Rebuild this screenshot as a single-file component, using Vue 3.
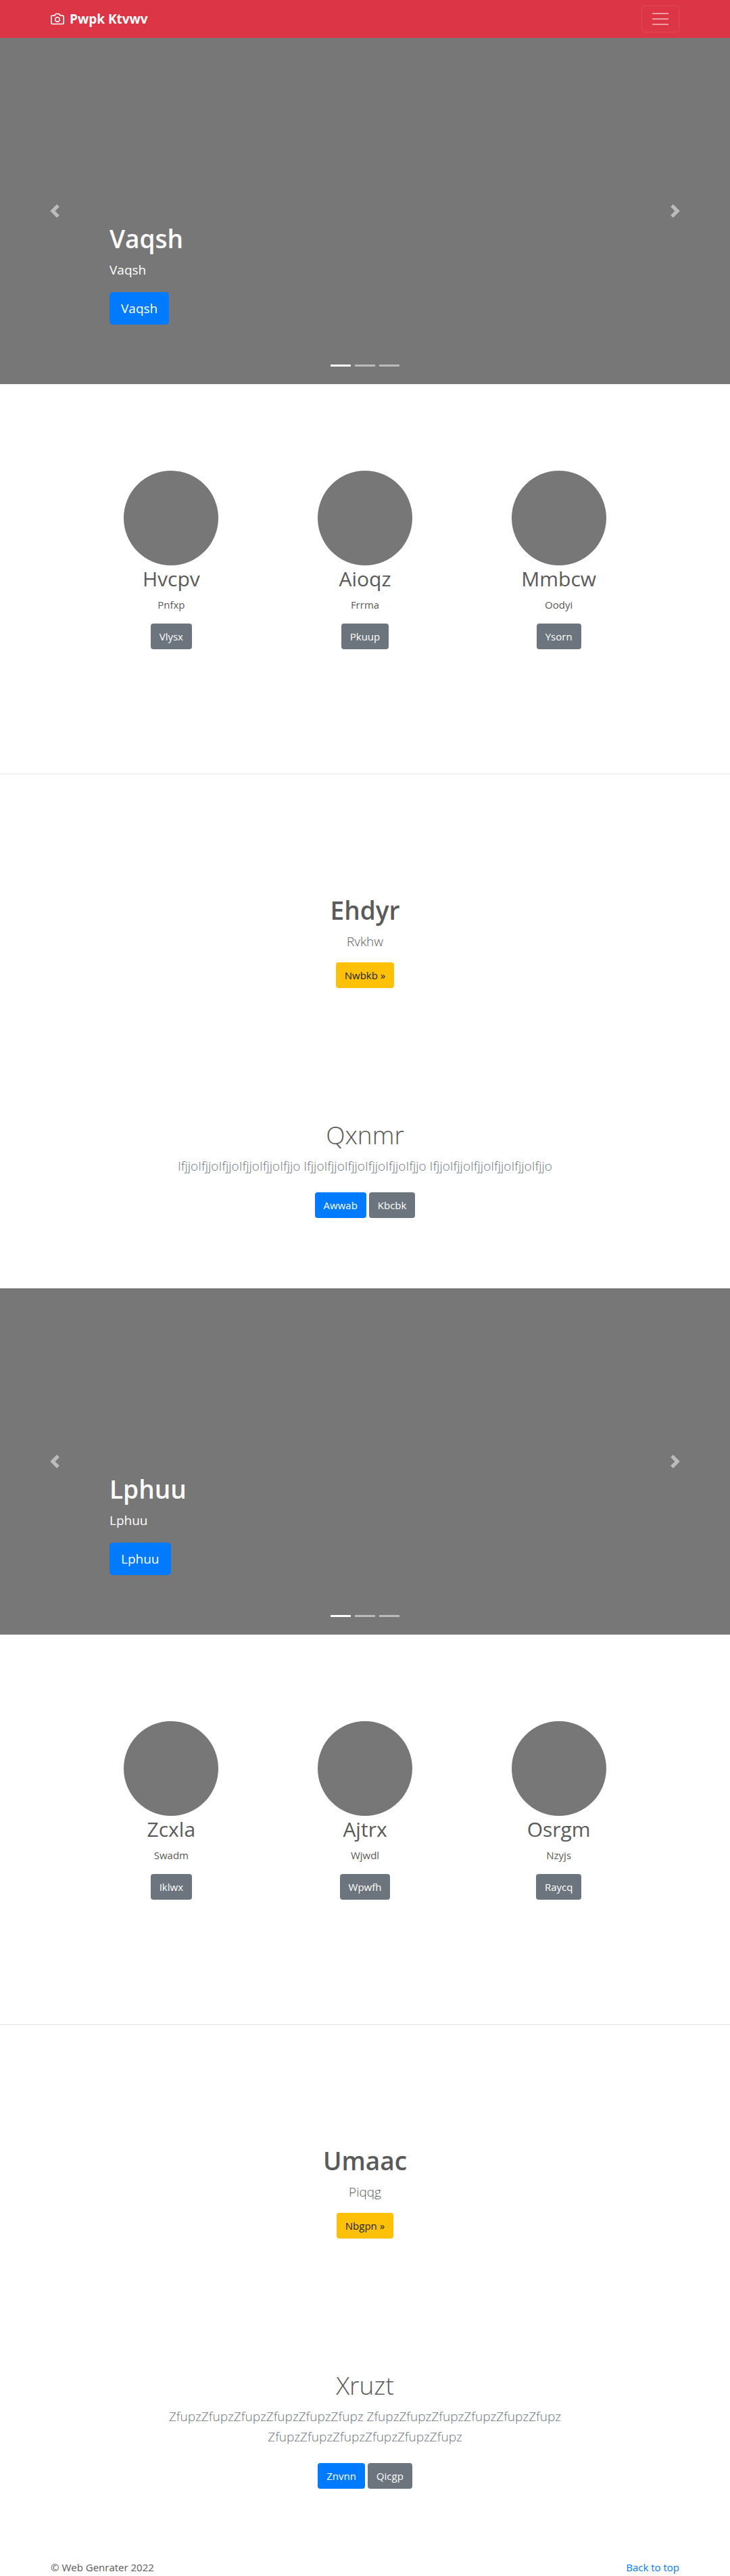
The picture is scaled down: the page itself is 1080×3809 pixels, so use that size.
<script setup>
const sections = [
  {
    hero: 'Vaqsh',
    people: [
      { name: 'Hvcpv', text: 'Pnfxp', action: 'Vlysx' },
      { name: 'Aioqz', text: 'Frrma', action: 'Pkuup' },
      { name: 'Mmbcw', text: 'Oodyi', action: 'Ysorn' },
    ],
    promo: { title: 'Ehdyr', text: 'Rvkhw', action: 'Nwbkb »' },
    album: {
      title: 'Qxnmr',
      text: 'IfjjoIfjjoIfjjoIfjjoIfjjoIfjjo IfjjoIfjjoIfjjoIfjjoIfjjoIfjjo IfjjoIfjjoIfjjoIfjjoIfjjoIfjjo',
      primary: 'Awwab',
      secondary: 'Kbcbk',
    },
  },
  {
    hero: 'Lphuu',
    people: [
      { name: 'Zcxla', text: 'Swadm', action: 'Iklwx' },
      { name: 'Ajtrx', text: 'Wjwdl', action: 'Wpwfh' },
      { name: 'Osrgm', text: 'Nzyjs', action: 'Raycq' },
    ],
    promo: { title: 'Umaac', text: 'Piqqg', action: 'Nbgpn »' },
    album: {
      title: 'Xruzt',
      text: 'ZfupzZfupzZfupzZfupzZfupzZfupz ZfupzZfupzZfupzZfupzZfupzZfupz ZfupzZfupzZfupzZfupzZfupzZfupz',
      primary: 'Znvnn',
      secondary: 'Qicgp',
    },
  },
]
</script>

<template>
  <div class="page">
    <header class="navbar">
      <div class="container bar">
        <a href="#" class="brand">
          <svg width="20" height="20" viewBox="0 0 24 24" fill="none" stroke="currentColor" stroke-width="2" stroke-linecap="round" stroke-linejoin="round" aria-hidden="true">
            <path d="M23 19a2 2 0 0 1-2 2H3a2 2 0 0 1-2-2V8a2 2 0 0 1 2-2h4l2-3h6l2 3h4a2 2 0 0 1 2 2z" />
            <circle cx="12" cy="13" r="4" />
          </svg>
          <strong>Pwpk Ktvwv</strong>
        </a>
        <button type="button" class="toggler" aria-label="Toggle navigation">
          <svg width="30" height="30" viewBox="0 0 30 30" fill="none" stroke="currentColor" stroke-width="2" stroke-linecap="square" aria-hidden="true">
            <path d="M4 7h22M4 15h22M4 23h22" />
          </svg>
        </button>
      </div>
    </header>

    <main>
      <template v-for="s in sections" :key="s.hero">
        <section class="carousel">
          <button type="button" class="control" aria-label="Previous">
            <svg width="20" height="20" viewBox="0 0 8 8" fill="currentColor" aria-hidden="true">
              <path d="M5.25 0l-4 4 4 4 1.5-1.5-2.5-2.5 2.5-2.5-1.5-1.5z" />
            </svg>
          </button>
          <div class="slide">
            <div class="caption">
              <h1>{{ s.hero }}</h1>
              <p>{{ s.hero }}</p>
              <a href="#" class="btn btn-lg primary">{{ s.hero }}</a>
            </div>
            <div class="indicators">
              <span class="active"></span>
              <span></span>
              <span></span>
            </div>
          </div>
          <button type="button" class="control" aria-label="Next">
            <svg width="20" height="20" viewBox="0 0 8 8" fill="currentColor" aria-hidden="true">
              <path d="M2.75 0l-1.5 1.5 2.5 2.5-2.5 2.5 1.5 1.5 4-4-4-4z" />
            </svg>
          </button>
        </section>

        <section class="people">
          <article v-for="p in s.people" :key="p.name" class="person">
            <div class="avatar"></div>
            <h2>{{ p.name }}</h2>
            <p>{{ p.text }}</p>
            <a href="#" class="btn secondary">{{ p.action }}</a>
          </article>
        </section>

        <hr />

        <section class="promo">
          <h1>{{ s.promo.title }}</h1>
          <p class="lead">{{ s.promo.text }}</p>
          <a href="#" class="btn warning">{{ s.promo.action }}</a>
        </section>

        <section class="album">
          <h1>{{ s.album.title }}</h1>
          <p class="lead muted">{{ s.album.text }}</p>
          <div class="actions">
            <a href="#" class="btn primary">{{ s.album.primary }}</a>
            <a href="#" class="btn secondary">{{ s.album.secondary }}</a>
          </div>
        </section>
      </template>
    </main>

    <footer class="container footer">
      <p>© Web Genrater 2022</p>
      <a href="#">Back to top</a>
    </footer>
  </div>
</template>

<style>
body {
  margin: 0;
  background: #fff;
}
</style>

<style scoped>
.page {
  color: #5a5a5a;
  font-family: "Open Sans", "Noto Sans", sans-serif;
  font-size: 15px;
  line-height: 24px;
}
.page *,
.page {
  box-sizing: border-box;
}
h1,
h2,
p {
  margin: 0;
}
a {
  color: #007bff;
  text-decoration: none;
}
.container {
  width: 100%;
  max-width: 960px;
  margin: 0 auto;
  padding: 0 15px;
}

.navbar {
  background: #dc3545;
}
.bar {
  display: flex;
  align-items: center;
  justify-content: space-between;
  height: 56px;
}
.brand {
  display: flex;
  align-items: center;
  gap: 8px;
  color: #fff;
  font-size: 19px;
  line-height: 30px;
}
.toggler {
  display: flex;
  padding: 4px 12px;
  border: 1px solid rgba(255, 255, 255, 0.1);
  border-radius: 4px;
  background: transparent;
  color: rgba(255, 255, 255, 0.5);
}

.carousel {
  display: flex;
  height: 512px;
  background: #777;
  color: #fff;
}
.control {
  display: flex;
  align-items: center;
  justify-content: center;
  flex: 0 0 15%;
  padding: 0;
  border: 0;
  background: transparent;
  color: #fff;
  opacity: 0.5;
}
.slide {
  flex: 1;
  display: flex;
  flex-direction: column;
  justify-content: flex-end;
}
.caption {
  padding-bottom: 59px;
}
h1 {
  margin-bottom: 6px;
  font-size: 37px;
  font-weight: 600;
  line-height: 50px;
}
.caption p {
  margin-bottom: 18px;
  font-size: 19px;
  line-height: 30px;
}
.indicators {
  display: flex;
  justify-content: center;
  gap: 6px;
  padding-bottom: 26px;
}
.indicators span {
  width: 30px;
  height: 3px;
  background: #fff;
  opacity: 0.5;
}
.indicators .active {
  opacity: 1;
}

.btn {
  display: inline-block;
  padding: 6px 12px;
  border: 1px solid transparent;
  border-radius: 4px;
  color: #fff;
  font-size: 15px;
  line-height: 24px;
  vertical-align: top;
}
.btn-lg {
  padding: 8px 16px;
  border-radius: 5px;
  font-size: 19px;
  line-height: 30px;
}
.primary {
  background: #007bff;
}
.secondary {
  background: #6c757d;
}
.warning {
  background: #ffc107;
  color: #212529;
}

.people {
  display: grid;
  grid-template-columns: repeat(3, 1fr);
  max-width: 860px;
  margin: 0 auto;
  padding: 128px 0 184px;
  text-align: center;
}
.avatar {
  width: 140px;
  height: 140px;
  margin: 0 auto;
  border-radius: 50%;
  background: #777;
}
h2 {
  margin-bottom: 6px;
  font-size: 30px;
  font-weight: 400;
  line-height: 40px;
}
.person p {
  margin-bottom: 16px;
}
hr {
  height: 1px;
  margin: 0;
  border: 0;
  background: rgba(0, 0, 0, 0.1);
}

.promo {
  padding: 176px 15px 96px;
  text-align: center;
}
.lead {
  margin-bottom: 16px;
  font-size: 19px;
  font-weight: 300;
  line-height: 30px;
}
.muted {
  color: #6c757d;
}
.album {
  max-width: 640px;
  margin: 0 auto;
  padding: 96px 15px;
  text-align: center;
}
.album h1 {
  font-weight: 300;
}
.actions {
  display: flex;
  justify-content: center;
  gap: 4px;
  padding: 8px 0;
}

.footer {
  display: flex;
  justify-content: space-between;
}
</style>
